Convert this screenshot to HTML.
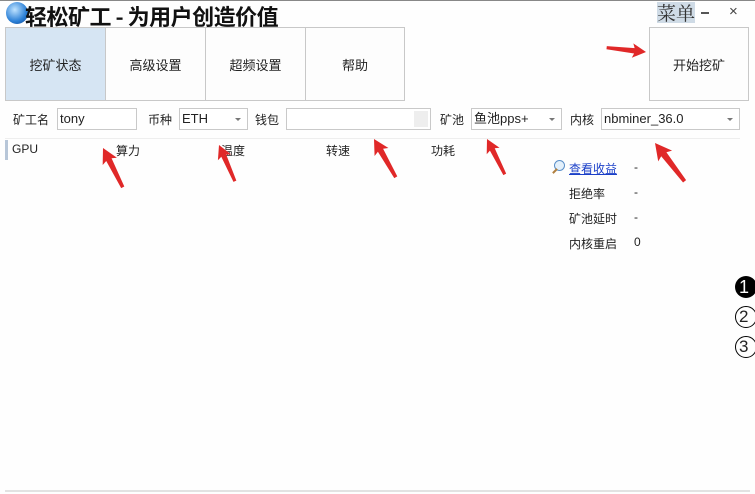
<!DOCTYPE html>
<html><head><meta charset="utf-8"><style>
body{margin:0;width:755px;height:494px;background:#fefefe;position:relative;overflow:hidden;font-family:"Liberation Sans","Noto Sans CJK SC",sans-serif;font-size:12px;color:#222}
.a{position:absolute}
.btn{position:absolute;top:27px;width:99px;height:74px;border:1px solid #c8c8c8;box-sizing:border-box;background:#fdfdfd;display:flex;align-items:center;justify-content:center;font-size:13px}
.in{position:absolute;top:108px;height:22px;border:1px solid #c9c9c9;box-sizing:border-box;background:#fff;padding-left:2px;line-height:20px;font-size:13px}
.dd{position:absolute;right:6px;top:9px;border-left:3px solid transparent;border-right:3px solid transparent;border-top:3px solid #777}
.lb{position:absolute;top:111px;font-size:12px}
</style></head><body>
<div class="a" style="left:0;top:0;width:755px;height:1px;background:#888"></div>
<div class="a" style="left:6px;top:2px;width:22px;height:22px;border-radius:50%;background:radial-gradient(circle at 40% 35%,#bfe3ff,#2a7fd6 60%,#0d3f8a)"></div>
<div class="a" style="left:25px;top:0px;font-size:22px;font-weight:bold;font-family:'Noto Sans CJK SC',sans-serif;color:#111;letter-spacing:-0.5px">轻松矿工 - 为用户创造价值</div>
<div class="a" style="left:657px;top:2px;font-size:19px;font-family:'Noto Serif CJK SC',serif;background:#cfdbe6;color:#333;line-height:21px">菜单</div>
<div class="a" style="left:701px;top:12px;width:8px;height:2px;background:#555"></div>
<div class="a" style="left:729px;top:3px;font-size:15px;color:#444">×</div>

<div class="btn" style="left:5px;width:101px;background:#d6e5f3">挖矿状态</div>
<div class="btn" style="left:105px;width:101px">高级设置</div>
<div class="btn" style="left:205px;width:101px">超频设置</div>
<div class="btn" style="left:305px;width:100px">帮助</div>
<div class="btn" style="left:649px;width:100px">开始挖矿</div>

<div class="lb" style="left:13px">矿工名</div>
<div class="in" style="left:57px;width:80px">tony</div>
<div class="lb" style="left:148px">币种</div>
<div class="in" style="left:179px;width:69px">ETH<span class="dd"></span></div>
<div class="lb" style="left:255px">钱包</div>
<div class="in" style="left:286px;width:145px"><span style="position:absolute;right:2px;top:2px;width:14px;height:16px;background:#eee"></span></div>
<div class="lb" style="left:440px">矿池</div>
<div class="in" style="left:471px;width:91px">鱼池pps+<span class="dd"></span></div>
<div class="lb" style="left:570px">内核</div>
<div class="in" style="left:601px;width:139px">nbminer_36.0<span class="dd"></span></div>

<div class="a" style="left:5px;top:138px;width:735px;height:1px;background:#eee"></div>
<div class="a" style="left:5px;top:140px;width:3px;height:20px;background:#b7c6d8"></div>
<div class="a" style="left:12px;top:142px">GPU</div>
<div class="a" style="left:116px;top:142px">算力</div>
<div class="a" style="left:221px;top:142px">温度</div>
<div class="a" style="left:326px;top:142px">转速</div>
<div class="a" style="left:431px;top:142px">功耗</div>

<div class="a" style="left:554px;top:160px;width:9px;height:9px;border:1.5px solid #5a8fc8;border-radius:50%;background:#e3f0fb"></div>
<div class="a" style="left:552px;top:170px;width:6px;height:2px;background:#b08040;transform:rotate(-45deg)"></div>
<div class="a" style="left:569px;top:160px;color:#1a3fc8;text-decoration:underline">查看收益</div>
<div class="a" style="left:634px;top:160px">-</div>
<div class="a" style="left:569px;top:185px">拒绝率</div>
<div class="a" style="left:634px;top:185px">-</div>
<div class="a" style="left:569px;top:210px">矿池延时</div>
<div class="a" style="left:634px;top:210px">-</div>
<div class="a" style="left:569px;top:235px">内核重启</div>
<div class="a" style="left:634px;top:235px">0</div>

<div class="a" style="left:735px;top:276px;width:22px;height:22px;border-radius:50%;background:#000;color:#fff;font-size:18px;line-height:22px;padding-left:4px;box-sizing:border-box">1</div>
<div class="a" style="left:735px;top:306px;width:22px;height:22px;border-radius:50%;border:1.5px solid #000;box-sizing:border-box;font-size:17px;line-height:19px;padding-left:3px">2</div>
<div class="a" style="left:735px;top:336px;width:22px;height:22px;border-radius:50%;border:1.5px solid #000;box-sizing:border-box;font-size:17px;line-height:19px;padding-left:3px">3</div>

<div class="a" style="left:5px;top:490px;width:745px;height:2px;background:#e2e2e2"></div>

<svg class="a" style="left:0;top:0" width="755" height="494">
<defs><polygon id="ar" points="0,0 15,-8 13,-3 44,-1.5 44,2 13,3 15,8" fill="#e02828"/></defs>
<use href="#ar" transform="translate(103,148) rotate(63)"/>
<use href="#ar" transform="translate(219,145) rotate(66) scale(0.9)"/>
<use href="#ar" transform="translate(374,139) rotate(60)"/>
<use href="#ar" transform="translate(487,139) rotate(63) scale(0.9)"/>
<use href="#ar" transform="translate(655,143) rotate(52) scale(1.1)"/>
<use href="#ar" transform="translate(646,52) rotate(186) scale(0.9)"/>
</svg>
</body></html>
